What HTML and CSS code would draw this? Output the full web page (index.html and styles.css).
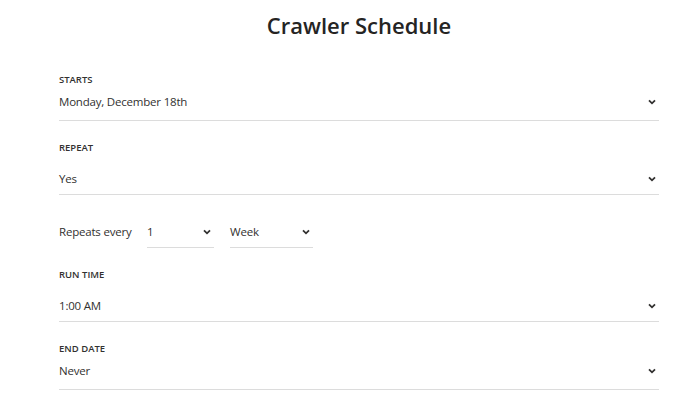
FILE: index.html
```html
<!DOCTYPE html>
<html lang="en">
<head>
<meta charset="utf-8">
<title>Crawler Schedule</title>
<link rel="stylesheet" href="styles.css">
</head>
<body>
<main class="panel">
  <h1 class="title">Crawler Schedule</h1>

  <section class="field field--date field--first">
    <div class="field-label">STARTS</div>
    <div class="field-value">
      <span class="value-text">Monday, December 18th</span>
      <svg class="chevron" width="8" height="6" viewBox="0 0 8 6"><path d="M1 1.3l3 3 3-3" fill="none" stroke="#323130" stroke-width="1.8"/></svg>
    </div>
  </section>

  <section class="field field--dropdown">
    <div class="field-label">REPEAT</div>
    <div class="field-value">
      <span class="value-text">Yes</span>
      <svg class="chevron" width="8" height="6" viewBox="0 0 8 6"><path d="M1 1.3l3 3 3-3" fill="none" stroke="#323130" stroke-width="1.8"/></svg>
    </div>
  </section>

  <div class="repeat-row">
    <span class="repeat-label">Repeats every</span>
    <div class="mini-select mini-select--num">
      <span class="value-text">1</span>
      <svg class="chevron" width="8" height="6" viewBox="0 0 8 6"><path d="M1 1.3l3 3 3-3" fill="none" stroke="#323130" stroke-width="1.8"/></svg>
    </div>
    <div class="mini-select mini-select--unit">
      <span class="value-text">Week</span>
      <svg class="chevron" width="8" height="6" viewBox="0 0 8 6"><path d="M1 1.3l3 3 3-3" fill="none" stroke="#323130" stroke-width="1.8"/></svg>
    </div>
  </div>

  <section class="field field--dropdown">
    <div class="field-label">RUN TIME</div>
    <div class="field-value">
      <span class="value-text">1:00 AM</span>
      <svg class="chevron" width="8" height="6" viewBox="0 0 8 6"><path d="M1 1.3l3 3 3-3" fill="none" stroke="#323130" stroke-width="1.8"/></svg>
    </div>
  </section>

  <section class="field field--date">
    <div class="field-label">END DATE</div>
    <div class="field-value">
      <span class="value-text">Never</span>
      <svg class="chevron" width="8" height="6" viewBox="0 0 8 6"><path d="M1 1.3l3 3 3-3" fill="none" stroke="#323130" stroke-width="1.8"/></svg>
    </div>
  </section>
</main>
</body>
</html>
```

FILE: styles.css
```css
html, body {
  margin: 0;
  padding: 0;
  background: #ffffff;
}

body {
  font-family: "Open Sans", "Noto Sans", "Liberation Sans", sans-serif;
  color: #323130;
}

.panel {
  width: 600px;
  margin-left: 59px;
}

.title {
  margin: 0;
  padding-top: 9px;
  font-size: 22px;
  line-height: 32px;
  font-weight: 600;
  text-align: center;
  color: #252423;
}

.field {
  margin-top: 20px;
}

.field--first {
  margin-top: 32px;
}

.field-label {
  font-size: 9.5px;
  line-height: 14px;
  font-weight: 600;
  color: #323130;
}

.field-value {
  display: flex;
  align-items: center;
  justify-content: space-between;
  border-bottom: 1px solid #dcdcdc;
  font-size: 11.5px;
  line-height: 20px;
}

.field--date .field-value {
  padding: 5px 3px 8px 0;
}

.field--dropdown .field-value {
  padding: 14px 3px 5px 0;
}

.value-text,
.repeat-label {
  white-space: nowrap;
  letter-spacing: -0.2px;
}

.chevron {
  display: block;
  flex: none;
}

.repeat-row {
  display: flex;
  align-items: flex-end;
  margin-top: 23px;
  font-size: 11.5px;
  line-height: 20px;
}

.repeat-label {
  width: 88px;
  padding-bottom: 6px;
}

.mini-select {
  display: flex;
  align-items: center;
  justify-content: space-between;
  padding: 4px 3px 5px 0;
  border-bottom: 1px solid #dcdcdc;
}

.mini-select--num {
  width: 64px;
}

.mini-select--unit {
  width: 80px;
  margin-left: 16px;
}
```
